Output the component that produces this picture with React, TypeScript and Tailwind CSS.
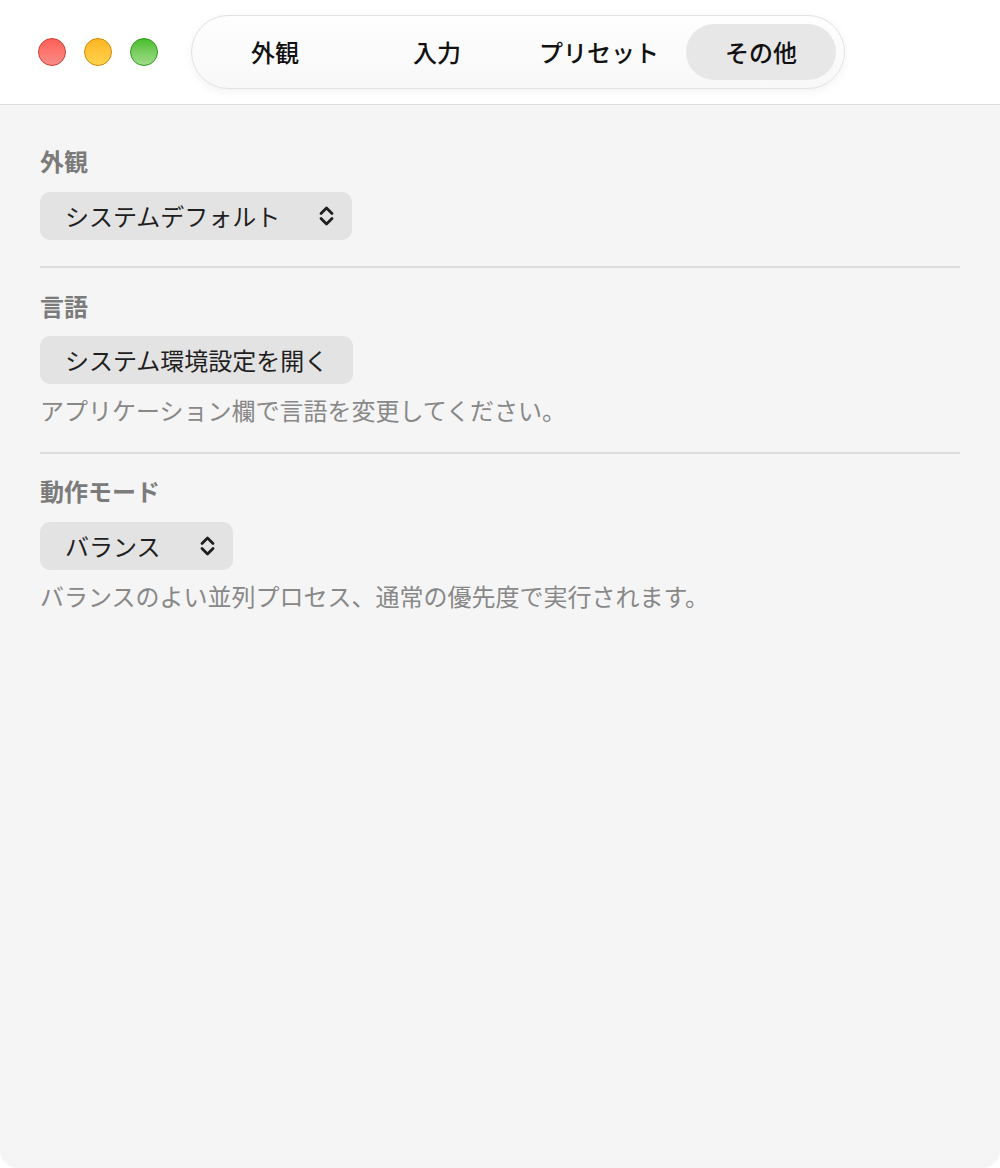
import React, { useState } from 'react';

const tabs = ['外観', '入力', 'プリセット', 'その他'];

const Chevrons = () => (
  <svg width="15" height="22" viewBox="0 0 15 22" fill="none" stroke="#1e1e1e" strokeWidth="2.8" strokeLinecap="round" strokeLinejoin="round">
    <path d="M2 8.5L7.5 3L13 8.5" />
    <path d="M2 13.5L7.5 19L13 13.5" />
  </svg>
);

const SelectBox = ({ value }: { value: string }) => (
  <button className="flex h-12 items-center gap-[39px] rounded-[10px] bg-[#e3e3e3] pl-[25px] pr-[18px] text-[24px] leading-8 text-[#1f1f1f]">
    <span>{value}</span>
    <Chevrons />
  </button>
);

export default function App() {
  const [active, setActive] = useState(3);

  return (
    <div className="min-h-[1168px] w-[1000px] bg-white" style={{ fontFamily: '"Noto Sans CJK JP", "Noto Sans", sans-serif' }}>
      <div className="flex h-[1168px] flex-col overflow-hidden rounded-b-[18px] bg-[#f5f5f5]">
        {/* Title bar */}
        <div className="flex h-[105px] shrink-0 items-center border-b border-[#dedede] bg-white pl-[38px]">
          <div className="flex items-center gap-[18px]">
            <span className="h-7 w-7 rounded-full border border-[#cf3a32] bg-linear-to-b from-[#ff5f57] to-[#f98c87]" />
            <span className="h-7 w-7 rounded-full border border-[#c98a06] bg-linear-to-b from-[#ffb620] to-[#ffd24c]" />
            <span className="h-7 w-7 rounded-full border border-[#2f961c] bg-linear-to-b from-[#47be27] to-[#a0dc8a]" />
          </div>
          <div className="ml-[33px] flex gap-3 rounded-full border border-[#e2e2e2] bg-linear-to-b from-[#fefefe] to-[#f8f8f8] p-2 shadow-[0_3px_10px_rgba(0,0,0,0.05)]">
            {tabs.map((t, i) => (
              <button
                key={t}
                onClick={() => setActive(i)}
                className={`flex h-14 w-[150px] items-center justify-center rounded-full text-[24px] font-medium text-[#111] ${
                  active === i ? 'bg-[#e7e7e7]' : ''
                }`}
              >
                {t}
              </button>
            ))}
          </div>
        </div>

        {/* Content */}
        <div className="flex flex-col px-10 pt-10">
          <section className="flex flex-col gap-[15px] border-b-2 border-[#dcdcdc] pb-[26px]">
            <h2 className="text-[24px] font-bold leading-8 text-[#7b7b7b]">外観</h2>
            <div className="flex">
              <SelectBox value="システムデフォルト" />
            </div>
          </section>

          <section className="flex flex-col border-b-2 border-[#dcdcdc] pb-[26px] pt-[22px]">
            <h2 className="text-[24px] font-bold leading-8 text-[#7b7b7b]">言語</h2>
            <div className="mt-[14px] flex">
              <button className="flex h-12 items-center rounded-[10px] bg-[#e3e3e3] px-[25px] text-[24px] leading-8 text-[#1f1f1f]">
                システム環境設定を開く
              </button>
            </div>
            <p className="mt-[10px] text-[24px] leading-8 text-[#888]">アプリケーション欄で言語を変更してください。</p>
          </section>

          <section className="flex flex-col pt-[21px]">
            <h2 className="text-[24px] font-bold leading-8 text-[#7b7b7b]">動作モード</h2>
            <div className="mt-[15px] flex">
              <SelectBox value="バランス" />
            </div>
            <p className="mt-[10px] text-[24px] leading-8 text-[#888]">バランスのよい並列プロセス、通常の優先度で実行されます。</p>
          </section>
        </div>
      </div>
    </div>
  );
}
